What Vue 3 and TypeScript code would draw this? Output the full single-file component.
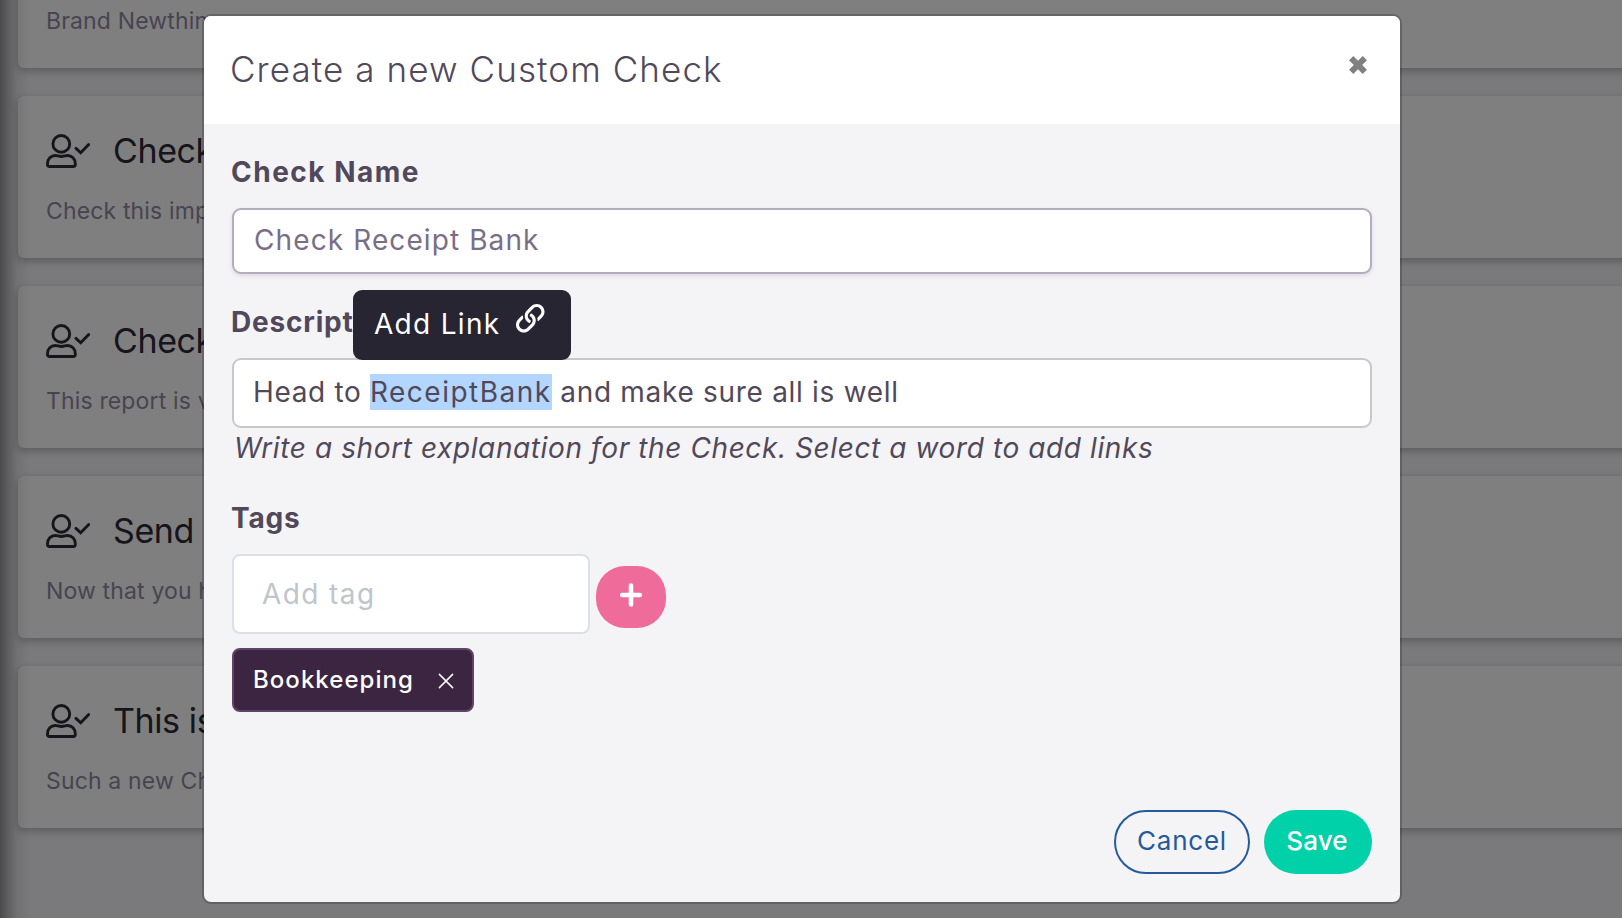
<script setup lang="ts">
import { ref } from 'vue'

interface Check {
  id: number
  title: string
  text: string
}

const checks: Check[] = [
  { id: 1, title: 'Brand New', text: 'Brand Newthing' },
  { id: 2, title: 'Check', text: 'Check this important' },
  { id: 3, title: 'Check', text: 'This report is very' },
  { id: 4, title: 'Send', text: 'Now that you have' },
  { id: 5, title: 'This is', text: 'Such a new Check' },
]

const checkName = ref('Check Receipt Bank')
const newTag = ref('')
const tags = ref<string[]>(['Bookkeeping'])

function addTag(): void {
  const tag = newTag.value.trim()
  if (tag) tags.value.push(tag)
  newTag.value = ''
}

function removeTag(tag: string): void {
  tags.value = tags.value.filter((t) => t !== tag)
}
</script>

<template>
  <div class="page">
    <main class="checks">
      <article v-for="check in checks" :key="check.id" class="card">
        <div class="card-head">
          <svg class="user-icon" viewBox="0 0 44 34" fill="none" stroke="currentColor" stroke-width="2.9">
            <circle cx="15.3" cy="9.9" r="8.4" />
            <path d="M1.5 29.7c0-4.8 3.4-8.2 7.8-8.2 2.4 0 3.2 1 6.1 1s3.7-1 6.1-1c4.4 0 7.8 3.4 7.8 8.2v1a1.8 1.8 0 0 1-1.8 1.8H3.3a1.8 1.8 0 0 1-1.8-1.8z" />
            <path d="M30 14.4l4.7 4.4 8-8.2" stroke-linejoin="miter" stroke-linecap="round" />
          </svg>
          <h3>{{ check.title }}</h3>
        </div>
        <p>{{ check.text }}</p>
      </article>
    </main>
    <div class="side-shadow"></div>

    <div class="overlay">
      <section class="modal" role="dialog">
        <header class="modal-head">
          <h2>Create a new Custom Check</h2>
          <button class="close" type="button" aria-label="Close">
            <svg viewBox="0 0 18 18" stroke="currentColor" stroke-width="6">
              <path d="M2.2 2.2l13.6 13.6M15.8 2.2L2.2 15.8" />
            </svg>
          </button>
        </header>

        <div class="modal-body">
          <label class="label name-label">Check Name</label>
          <input v-model="checkName" class="name-input" type="text" />

          <div class="description">
            <label class="label">Description</label>
            <div class="editor">
              <span class="before">Head to </span><span class="selected">ReceiptBank</span><span class="after"> and make sure all is well</span>
            </div>
            <div class="link-tip">
              <span>Add Link</span>
              <svg viewBox="0 0 512 512" fill="currentColor">
                <path d="M314.222 197.78c51.091 51.091 54.377 132.287 9.75 187.16-6.242 7.73-2.784 3.865-84.94 86.02-54.696 54.696-143.266 54.745-197.99 0-54.711-54.69-54.734-143.255 0-197.99 32.773-32.773 51.835-51.899 63.409-63.457 7.463-7.452 20.331-2.354 20.486 8.192a173.31 173.31 0 0 0 4.746 37.828c.966 4.029-.272 8.269-3.202 11.198L80.632 312.57c-32.755 32.775-32.887 85.892 0 118.8 32.775 32.755 85.892 32.887 118.8 0l75.19-75.2c32.718-32.725 32.777-86.013 0-118.79a83.722 83.722 0 0 0-22.814-16.229c-4.623-2.233-7.182-7.25-6.561-12.346 1.356-11.122 6.296-21.885 14.815-30.405l4.375-4.375c3.625-3.626 9.177-4.594 13.76-2.294 12.999 6.524 25.187 15.211 36.025 26.049zM470.958 41.04c-54.724-54.745-143.294-54.696-197.99 0-82.156 82.156-78.698 78.29-84.94 86.02-44.627 54.873-41.341 136.069 9.75 187.16 10.838 10.838 23.026 19.525 36.025 26.049 4.582 2.3 10.134 1.331 13.76-2.294l4.375-4.375c8.52-8.519 13.459-19.283 14.815-30.405.621-5.096-1.938-10.113-6.561-12.346a83.706 83.706 0 0 1-22.814-16.229c-32.777-32.777-32.718-86.065 0-118.79l75.19-75.2c32.908-32.887 86.025-32.755 118.8 0 32.887 32.908 32.755 86.025 0 118.8l-45.848 45.84c-2.93 2.929-4.168 7.169-3.202 11.198a173.31 173.31 0 0 1 4.746 37.828c.155 10.546 13.023 15.644 20.486 8.192 11.574-11.558 30.636-30.684 63.409-63.457 54.733-54.735 54.71-143.3-.001-197.991z" />
              </svg>
            </div>
          </div>
          <p class="hint">Write a short explanation for the Check. Select a word to add links</p>

          <label class="label tags-label">Tags</label>
          <div class="tag-row">
            <input v-model="newTag" class="tag-input" type="text" placeholder="Add tag" @keyup.enter="addTag" />
            <button class="add" type="button" aria-label="Add tag" @click="addTag">
              <svg viewBox="0 0 24 24" fill="none" stroke="currentColor" stroke-width="4.6" stroke-linecap="round">
                <path d="M12 2.6v18.8M3.2 12h17.6" />
              </svg>
            </button>
          </div>
          <div class="tag-list">
            <div v-for="tag in tags" :key="tag" class="tag">
              <span>{{ tag }}</span>
              <svg viewBox="0 0 16 16" fill="none" stroke="currentColor" stroke-width="1.5" stroke-linecap="round" @click="removeTag(tag)">
                <path d="M1.4 1.4l13.2 13.2M14.6 1.4L1.4 14.6" />
              </svg>
            </div>
          </div>
        </div>

        <footer class="modal-foot">
          <button class="cancel" type="button">Cancel</button>
          <button class="save" type="button">Save</button>
        </footer>
      </section>
    </div>
  </div>
</template>

<style>
body {
  margin: 0;
  overflow: hidden;
}
</style>

<style scoped>
* {
  box-sizing: border-box;
}

.page {
  position: relative;
  width: 100%;
  height: 918px;
  overflow: hidden;
  background: #f4f4f8;
  color: #51485a;
  font-family: Inter, "Open Sans", sans-serif;
}

h2,
h3,
p {
  margin: 0;
}

button {
  border: 0;
  padding: 0;
  background: none;
  font-family: inherit;
}

svg {
  display: block;
  flex: none;
}

.checks {
  position: relative;
  display: flex;
  flex-direction: column;
  gap: 28px;
  margin: -94px -20px 0 18px;
}

.card {
  height: 162px;
  flex: none;
  padding: 30px 28px 0;
  background: #fff;
  border-radius: 6px;
  box-shadow: 0 3px 8px rgba(0, 0, 0, 0.26);
}

.card-head {
  display: flex;
  align-items: center;
  gap: 23px;
  height: 50px;
  color: #2c2a38;
}

.user-icon {
  width: 44px;
  height: 34px;
}

.card h3 {
  font-size: 34px;
  line-height: 50px;
  font-weight: 400;
  letter-spacing: -0.4px;
  white-space: nowrap;
}

.card p {
  margin-top: 17px;
  color: #8f89a4;
  font-size: 23px;
  line-height: 36px;
  letter-spacing: 0.15px;
  white-space: nowrap;
}

.side-shadow {
  position: absolute;
  inset: 0 auto 0 0;
  width: 30px;
  background: linear-gradient(to right, rgba(0, 0, 0, 0.38), rgba(0, 0, 0, 0.24) 25%, rgba(0, 0, 0, 0.08) 55%, rgba(0, 0, 0, 0));
}

.overlay {
  position: absolute;
  inset: 0;
  display: flex;
  align-items: flex-start;
  padding: 14px 0 0 202px;
  background: rgba(0, 0, 0, 0.5);
}

.modal {
  display: flex;
  flex-direction: column;
  width: 1200px;
  height: 890px;
  border: 2px solid rgba(0, 0, 0, 0.2);
  border-radius: 9px;
  background: #f4f4f7;
  background-clip: padding-box;
}

.modal-head {
  display: flex;
  justify-content: space-between;
  align-items: flex-start;
  height: 108px;
  padding: 26px 33px 0 26px;
  background: #fff;
  border-radius: 7px 7px 0 0;
}

.modal-head h2 {
  font-size: 35px;
  line-height: 54px;
  font-weight: 300;
  letter-spacing: 1.1px;
}

.close {
  margin-top: 14px;
  color: #808080;
}

.close svg {
  width: 18px;
  height: 18px;
}

.modal-body {
  flex: 1;
  padding: 30px 28px 0;
}

.label {
  display: block;
  height: 36px;
  margin-left: -1px;
  font-size: 28px;
  line-height: 36px;
  font-weight: 700;
  letter-spacing: 0.8px;
}

.name-label {
  letter-spacing: 1.5px;
}

.name-input {
  display: block;
  width: 100%;
  height: 66px;
  margin-top: 18px;
  padding: 0 20px 2px;
  border: 2px solid #b5acbd;
  border-radius: 9px;
  outline: none;
  background: #fff;
  box-shadow: 0 2px 4px rgba(60, 40, 80, 0.12);
  color: #7a6e87;
  font: 400 28px/36px Inter, "Open Sans", sans-serif;
  letter-spacing: 1.1px;
}

.description {
  position: relative;
  margin-top: 30px;
}

.editor {
  display: flex;
  align-items: center;
  height: 70px;
  margin-top: 18px;
  padding: 0 19px 2px;
  border: 2px solid #c8c8ca;
  border-radius: 9px;
  background: #fff;
  font-size: 28px;
  line-height: 36px;
  white-space: pre;
}

.before {
  letter-spacing: 0.65px;
}

.selected {
  background: #b2d6ff;
  letter-spacing: 1.5px;
}

.after {
  letter-spacing: 0.7px;
}

.link-tip {
  position: absolute;
  left: 121px;
  top: -14px;
  display: flex;
  gap: 16px;
  width: 218px;
  height: 70px;
  padding: 14px 0 0 21px;
  border-radius: 9px;
  background: #272532;
  color: #fff;
  font-size: 28px;
}

.link-tip span {
  padding-top: 2px;
  line-height: 36px;
  letter-spacing: 1.3px;
  white-space: nowrap;
}

.link-tip svg {
  width: 28.5px;
  height: 28.5px;
}

.hint {
  margin: 2px 0 0 2px;
  font-size: 28px;
  line-height: 36px;
  font-style: italic;
  letter-spacing: 0.6px;
  white-space: nowrap;
}

.tags-label {
  margin-top: 34px;
}

.tag-row {
  display: flex;
  align-items: flex-end;
  gap: 6px;
  margin-top: 18px;
}

.tag-input {
  width: 358px;
  height: 80px;
  padding: 0 28px;
  border: 2px solid #dcdfe6;
  border-radius: 8px;
  outline: none;
  background: #fff;
  font: 400 28px/36px Inter, "Open Sans", sans-serif;
  letter-spacing: 1.4px;
}

.tag-input::placeholder {
  color: #c0c4cc;
  opacity: 1;
}

.add {
  display: flex;
  align-items: center;
  justify-content: center;
  width: 70px;
  height: 62px;
  margin-bottom: 6px;
  padding-bottom: 4px;
  border-radius: 29px;
  background: #ef6c9a;
  color: #fff;
}

.add svg {
  width: 24px;
  height: 24px;
}

.tag-list {
  display: flex;
  gap: 10px;
  margin-top: 14px;
}

.tag {
  display: flex;
  align-items: center;
  justify-content: space-between;
  width: 242px;
  height: 64px;
  padding: 0 18px 2px 19px;
  border: 2px solid #5c4664;
  border-radius: 8px;
  background: #3b2540;
  color: #fff;
  font-size: 24px;
  font-weight: 500;
  letter-spacing: 1.05px;
}

.tag svg {
  width: 16px;
  height: 16px;
  margin-top: 3px;
}

.modal-foot {
  display: flex;
  justify-content: flex-end;
  gap: 14px;
  padding: 0 28px 28px;
}

.modal-foot button {
  height: 64px;
  padding-bottom: 4px;
  border-radius: 32px;
  font-size: 26px;
  font-weight: 400;
}

.modal-foot .cancel {
  width: 136px;
  border: 2px solid #245a9c;
  color: #245a9c;
  letter-spacing: 0.75px;
}

.modal-foot .save {
  width: 108px;
  padding-right: 2px;
  background: #00d1a8;
  color: #fff;
  font-weight: 500;
  letter-spacing: 0.2px;
}
</style>
